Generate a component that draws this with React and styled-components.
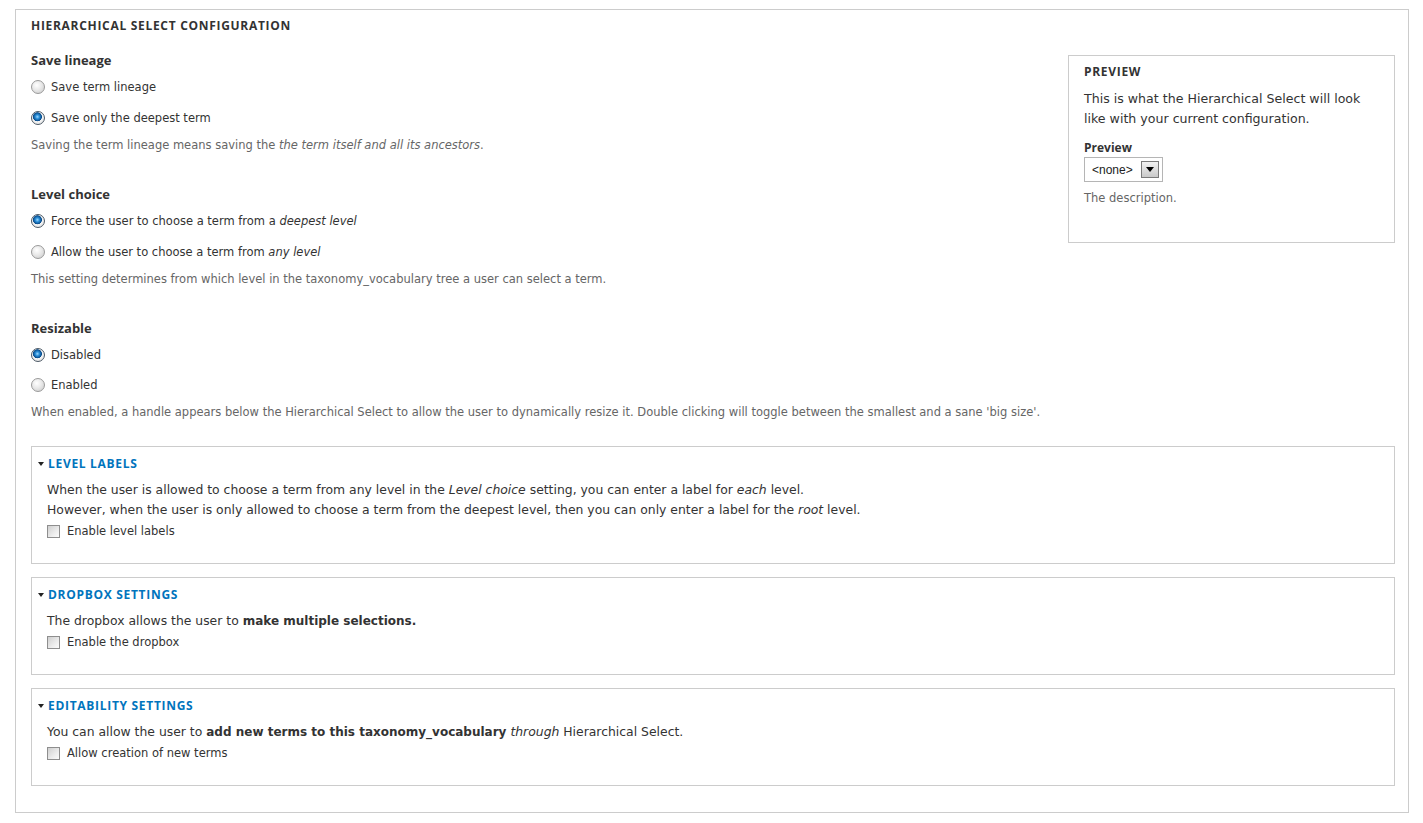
import React from 'react'
import styled, { createGlobalStyle } from 'styled-components'

const GlobalStyle = createGlobalStyle`
  body {
    margin: 0;
    background: #fff;
    color: #333;
    font-family: "DejaVu Sans", "Open Sans", sans-serif;
  }
`;

const headingFont = `"Open Sans", "DejaVu Sans", sans-serif`;

const Page = styled.div`
  padding: 9px 14px 10px 15px;
`;

const Fieldset = styled.section`
  border: 1px solid #ccc;
  padding: 6px 13px 26px 15px;
`;

const Legend = styled.div`
  display: flex;
  align-items: center;
  gap: 4px;
  margin-left: ${p => (p.$collapsible ? '-10px' : '0')};
  font-family: ${headingFont};
  font-size: 12px;
  font-weight: bold;
  letter-spacing: 0.7px;
  line-height: 20px;
  text-transform: uppercase;
  color: ${p => (p.$collapsible ? '#0074bd' : '#333')};
`;

const Arrow = styled.span`
  width: 0;
  height: 0;
  margin-left: 1px;
  border-left: 3px solid transparent;
  border-right: 3px solid transparent;
  border-top: 4px solid #222;
`;

const TopRow = styled.div`
  display: grid;
  grid-template-columns: 1fr 327px;
  column-gap: 20px;
  align-items: start;
`;

const Group = styled.div`
  margin-top: 29px;
  &:first-child {
    margin-top: 14px;
  }
`;

const GroupTitle = styled.div`
  font-family: ${headingFont};
  font-size: 13px;
  font-weight: bold;
  line-height: 20px;
`;

const Options = styled.div`
  display: flex;
  flex-direction: column;
  gap: ${p => p.$gap}px;
  margin-top: 7px;
`;

const OptionRow = styled.label`
  display: flex;
  align-items: center;
  gap: 6px;
  font-size: 11.5px;
  line-height: 20px;
  color: #333;
`;

const Radio = styled.span`
  width: 14px;
  height: 14px;
  box-sizing: border-box;
  border-radius: 50%;
  flex-shrink: 0;
  border: 1px solid ${p => (p.$checked ? '#4d5a66' : '#9a9a9a')};
  background: ${p =>
    p.$checked
      ? 'radial-gradient(circle at 45% 40%, #9fd8ff 0, #2a8fd8 2px, #0b4f8f 4px, #0b4f8f 4.2px, #f4f4f4 4.8px, #d8d8d8 100%)'
      : 'radial-gradient(circle at 40% 35%, #ffffff 0, #e9e9e9 45%, #c8c8c8 100%)'};
`;

const Checkbox = styled.span`
  width: 13px;
  height: 13px;
  box-sizing: border-box;
  flex-shrink: 0;
  border: 1px solid #8e8e8e;
  background: linear-gradient(135deg, #cfcfcf 0%, #ececec 60%, #fbfbfb 100%);
`;

const Description = styled.div`
  margin-top: 7px;
  font-size: 11.5px;
  line-height: 20px;
  color: #666;
`;

const PreviewBox = styled.aside`
  margin-top: 19px;
  border: 1px solid #ccc;
  padding: 6px 15px 35px 15px;
`;

const PreviewText = styled.p`
  margin: 7px 0 0;
  font-size: 12.6px;
  line-height: 20px;
  color: #333;
`;

const PreviewLabel = styled.div`
  margin-top: 9px;
  font-family: ${headingFont};
  font-size: 12px;
  font-weight: bold;
  line-height: 19px;
`;

const FakeSelect = styled.div`
  display: flex;
  align-items: center;
  justify-content: space-between;
  width: 79px;
  height: 25px;
  box-sizing: border-box;
  border: 1px solid #b5b5b5;
  padding: 0 3px 0 7px;
  background: #fff;
  font-family: "Liberation Sans", Arial, sans-serif;
  font-size: 12px;
  color: #222;
`;

const SelectButton = styled.span`
  display: flex;
  align-items: center;
  justify-content: center;
  width: 18px;
  height: 17px;
  box-sizing: border-box;
  border: 1px solid #7a7a7a;
  background: linear-gradient(#f2f2f2, #c9c9c9);
  &::after {
    content: '';
    border-left: 4px solid transparent;
    border-right: 4px solid transparent;
    border-top: 5px solid #000;
  }
`;

const SmallDescription = styled.div`
  margin-top: 7px;
  font-size: 11.5px;
  line-height: 18px;
  color: #666;
`;

const SubSections = styled.div`
  display: flex;
  flex-direction: column;
  gap: 13px;
  margin-top: 24px;
`;

const SubFieldset = styled.section`
  border: 1px solid #ccc;
  padding: 7px 15px 22px 15px;
`;

const SubBody = styled.div`
  margin-top: 6px;
  font-size: 12.4px;
  line-height: 20px;
  color: #333;
  strong {
    font-size: 12px;
  }
`;

const CheckRow = styled(OptionRow)`
  margin-top: 1px;
  gap: 7px;
`;

const groups = [
  {
    title: 'Save lineage',
    gap: 11,
    options: [
      { label: 'Save term lineage', checked: false },
      { label: 'Save only the deepest term', checked: true },
    ],
    desc: (
      <>
        Saving the term lineage means saving the <em>the term itself and all its ancestors</em>.
      </>
    ),
  },
  {
    title: 'Level choice',
    gap: 11,
    options: [
      { label: <>Force the user to choose a term from a <em>deepest level</em></>, checked: true },
      { label: <>Allow the user to choose a term from <em>any level</em></>, checked: false },
    ],
    desc: 'This setting determines from which level in the taxonomy_vocabulary tree a user can select a term.',
  },
  {
    title: 'Resizable',
    gap: 10,
    options: [
      { label: 'Disabled', checked: true },
      { label: 'Enabled', checked: false },
    ],
    desc: "When enabled, a handle appears below the Hierarchical Select to allow the user to dynamically resize it. Double clicking will toggle between the smallest and a sane 'big size'.",
  },
];

const sections = [
  {
    title: 'Level labels',
    body: (
      <>
        When the user is allowed to choose a term from any level in the <em>Level choice</em> setting, you can enter a label for <em>each</em> level.
        <br />
        However, when the user is only allowed to choose a term from the deepest level, then you can only enter a label for the <em>root</em> level.
      </>
    ),
    check: 'Enable level labels',
  },
  {
    title: 'Dropbox settings',
    body: (
      <>
        The dropbox allows the user to <strong>make multiple selections.</strong>
      </>
    ),
    check: 'Enable the dropbox',
  },
  {
    title: 'Editability settings',
    body: (
      <>
        You can allow the user to <strong>add new terms to this taxonomy_vocabulary</strong> <em>through</em> Hierarchical Select.
      </>
    ),
    check: 'Allow creation of new terms',
  },
];

export default function App() {
  return (
    <Page>
      <GlobalStyle />
      <Fieldset>
        <Legend>Hierarchical Select configuration</Legend>
        <TopRow>
          <div>
            {groups.map((g, i) => (
              <Group key={i}>
                <GroupTitle>{g.title}</GroupTitle>
                <Options $gap={g.gap}>
                  {g.options.map((o, j) => (
                    <OptionRow key={j}>
                      <Radio $checked={o.checked} />
                      <span>{o.label}</span>
                    </OptionRow>
                  ))}
                </Options>
                <Description>{g.desc}</Description>
              </Group>
            ))}
          </div>
          <PreviewBox>
            <Legend>Preview</Legend>
            <PreviewText>
              This is what the Hierarchical Select will look like with your current configuration.
            </PreviewText>
            <PreviewLabel>Preview</PreviewLabel>
            <FakeSelect>
              <span>&lt;none&gt;</span>
              <SelectButton />
            </FakeSelect>
            <SmallDescription>The description.</SmallDescription>
          </PreviewBox>
        </TopRow>
        <SubSections>
          {sections.map((s, i) => (
            <SubFieldset key={i}>
              <Legend $collapsible>
                <Arrow />
                {s.title}
              </Legend>
              <SubBody>{s.body}</SubBody>
              <CheckRow>
                <Checkbox />
                <span>{s.check}</span>
              </CheckRow>
            </SubFieldset>
          ))}
        </SubSections>
      </Fieldset>
    </Page>
  );
}
